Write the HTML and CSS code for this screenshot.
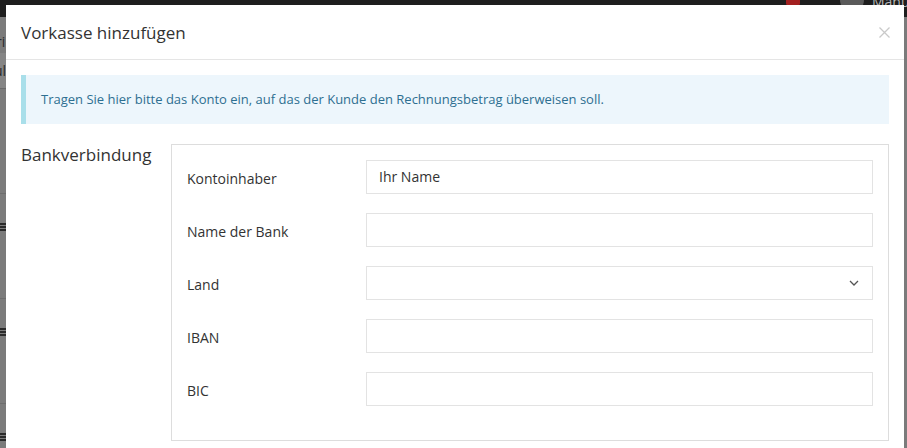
FILE: index.html
```html
<!DOCTYPE html>
<html lang="de">
<head>
<meta charset="utf-8">
<title>Vorkasse hinzufügen</title>
<link rel="stylesheet" href="styles.css">
</head>
<body>
<div class="page">
  <div class="navbar">
    <span class="nav-badge"></span>
    <span class="nav-avatar"></span>
    <span class="nav-user">Manu</span>
  </div>
  <div class="page-side">
    <div class="side-text">ri</div>
    <div class="side-block">ul</div>
    <div class="side-row"><span class="burger"></span></div>
    <div class="side-row"><span class="burger"></span></div>
    <div class="side-row"><span class="burger"></span></div>
  </div>
</div>

<div class="modal">
  <div class="modal-header">
    <h4 class="modal-title">Vorkasse hinzufügen</h4>
    <span class="close" aria-label="Schließen">
      <svg width="11" height="11" viewBox="0 0 11 11"><path d="M0.5 0.5L10.5 10.5M10.5 0.5L0.5 10.5" stroke="#c9c9c9" stroke-width="1.3" fill="none"/></svg>
    </span>
  </div>
  <div class="modal-body">
    <div class="alert">Tragen Sie hier bitte das Konto ein, auf das der Kunde den Rechnungsbetrag überweisen soll.</div>
    <div class="section">
      <div class="section-label">Bankverbindung</div>
      <div class="fieldset">
        <div class="row">
          <label class="row-label">Kontoinhaber</label>
          <div class="input">Ihr Name</div>
        </div>
        <div class="row">
          <label class="row-label">Name der Bank</label>
          <div class="input"></div>
        </div>
        <div class="row">
          <label class="row-label">Land</label>
          <div class="input select">
            <svg width="10" height="6" viewBox="0 0 10 6"><path d="M1 1L5 5L9 1" stroke="#555" stroke-width="1.3" fill="none"/></svg>
          </div>
        </div>
        <div class="row">
          <label class="row-label">IBAN</label>
          <div class="input"></div>
        </div>
        <div class="row">
          <label class="row-label">BIC</label>
          <div class="input"></div>
        </div>
      </div>
    </div>
  </div>
</div>
</body>
</html>
```
FILE: styles.css
```css
html, body {
  margin: 0;
  padding: 0;
  height: 100%;
  overflow: hidden;
}
body {
  font-family: "Open Sans", "Liberation Sans", sans-serif;
  background: #7b7b7b;
  color: #333;
}
.page {
  height: 100%;
}
.navbar {
  height: 17px;
  background: #1e1e1e;
  display: flex;
  align-items: flex-start;
  padding-left: 786px;
  overflow: hidden;
}
.nav-badge {
  width: 14px;
  height: 10px;
  margin-top: -4px;
  background: #a32020;
  border-radius: 3px;
  margin-right: 40px;
  flex: none;
}
.nav-avatar {
  width: 24px;
  height: 24px;
  margin-top: -12px;
  border-radius: 50%;
  background: #5a5a5a;
  margin-right: 8px;
  flex: none;
}
.nav-user {
  color: #b8b8b8;
  font-size: 14px;
  line-height: 14px;
  margin-top: -5px;
  white-space: nowrap;
}
.page-side {
  width: 40px;
  display: flex;
  flex-direction: column;
  color: #2a2a2a;
  font-size: 14px;
}
.side-text {
  height: 36px;
  line-height: 50px;
  text-indent: -4px;
}
.side-block {
  height: 35px;
  line-height: 35px;
  background: #858585;
  border-bottom: 1px solid #6a6a6a;
  text-indent: -6px;
}
.side-row {
  height: 104px;
  border-bottom: 1px solid #6d6d6d;
  display: flex;
  align-items: flex-end;
}
.burger {
  display: block;
  width: 6px;
  height: 2px;
  margin-bottom: -32px;
  background: #2a2a2a;
  box-shadow: 0 3px 0 #2a2a2a, 0 6px 0 #2a2a2a;
}

.modal {
  position: absolute;
  left: 6px;
  right: 3px;
  top: 5px;
  bottom: -60px;
  background: #fff;
}
.modal-header {
  display: flex;
  align-items: center;
  justify-content: space-between;
  padding: 15px 14px 15px 15px;
  border-bottom: 1px solid #e5e5e5;
}
.modal-title {
  margin: 0;
  font-size: 17px;
  font-weight: 400;
  line-height: 24px;
  padding-top: 1px;
  margin-bottom: -1px;
  color: #333;
}
.close {
  display: flex;
  width: 11px;
  height: 11px;
}
.modal-body {
  padding: 15px;
}
.alert {
  background: #edf6fc;
  border-left: 5px solid #a9dfea;
  color: #2d6f91;
  font-size: 13px;
  line-height: 19px;
  padding: 15px;
  margin-bottom: 20px;
}
.section {
  display: flex;
}
.section-label {
  width: 150px;
  flex: none;
  font-size: 17px;
  line-height: 24px;
  margin-top: -1px;
  color: #333;
}
.fieldset {
  flex: 1;
  border: 1px solid #ddd;
  padding: 15px 15px 34px 15px;
  display: flex;
  flex-direction: column;
  gap: 19px;
}
.row {
  display: flex;
  align-items: center;
}
.row-label {
  width: 179px;
  flex: none;
  font-size: 14px;
  padding-top: 2px;
  color: #333;
}
.input {
  flex: 1;
  box-sizing: border-box;
  height: 34px;
  border: 1px solid #e3e3e3;
  padding: 0 12px;
  font-size: 14px;
  line-height: 32px;
  color: #333;
}
.select {
  display: flex;
  align-items: center;
  justify-content: flex-end;
  padding-right: 13px;
}
```
